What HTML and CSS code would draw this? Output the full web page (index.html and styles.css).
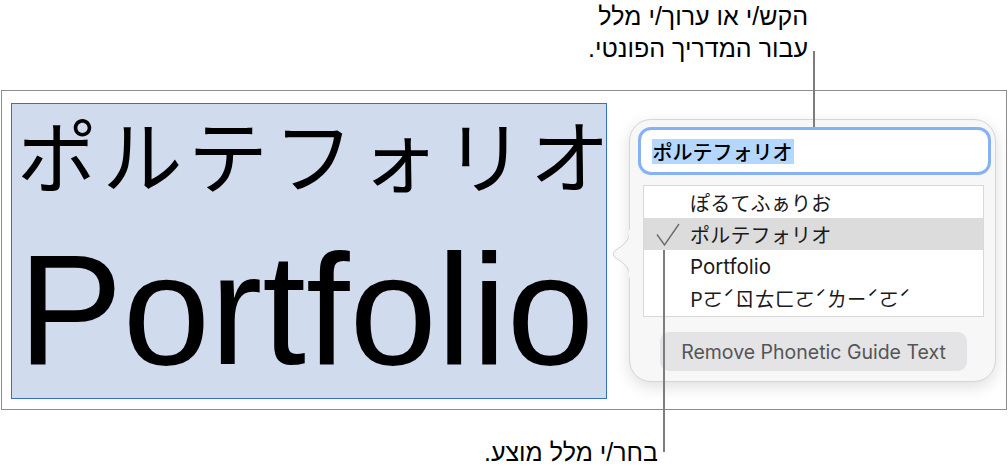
FILE: index.html
```html
<!DOCTYPE html>
<html lang="he">
<head>
<meta charset="utf-8">
<title>Phonetic Guide</title>
<link rel="stylesheet" href="styles.css">
</head>
<body>
<div class="page">
  <div class="label label-top" dir="rtl">
    <div>הקש/י או ערוך/י מלל</div>
    <div>עבור המדריך הפונטי.</div>
  </div>

  <div class="frame">
    <div class="selection">
      <div class="jp-big" lang="ja">ポルテフォリオ</div>
      <div class="en-big">Portfolio</div>
    </div>

    <div class="popover">
      <svg class="arrow" width="20" height="48" viewBox="0 0 20 48">
        <path d="M19 1 C19 11 11 16 4 20.5 Q0.5 24 4 27.5 C11 32 19 37 19 47 Z" fill="#f7f7f8" stroke="#d2d2d2" stroke-width="1"/>
        <rect x="18" y="0" width="3" height="48" fill="#f7f7f8"/>
      </svg>
      <div class="field"><span class="field-sel" lang="ja">ポルテフォリオ</span></div>
      <div class="list">
        <div class="row"><span class="check"></span><span class="jp" lang="ja">ぽるてふぁりお</span></div>
        <div class="row row-on"><span class="check"><svg width="24" height="23" viewBox="0 0 24 23"><path d="M1 11.5 L8.5 22 L23 1" fill="none" stroke="#6b6b6b" stroke-width="1.4"/></svg></span><span class="jp" lang="ja">ポルテフォリオ</span></div>
        <div class="row"><span class="check"></span><span class="en">Portfolio</span></div>
        <div class="row"><span class="check"></span><span class="bpmf" lang="zh-TW">Pㄛˊㄖㄊㄈㄛˊㄌㄧˊㄛˊ</span></div>
      </div>
      <div class="btn">Remove Phonetic Guide Text</div>
    </div>
  </div>

  <div class="label label-bottom" dir="rtl">בחר/י מלל מוצע.</div>

  <div class="callout callout-top"></div>
  <div class="callout callout-bottom"></div>
</div>
</body>
</html>
```

FILE: styles.css
```css
html, body {
  margin: 0;
  padding: 0;
  background: #ffffff;
}

.page {
  position: relative;
  width: 1008px;
  height: 471px;
  overflow: hidden;
  font-family: "Liberation Sans", "DejaVu Sans", sans-serif;
  color: #000;
}

.label {
  font-family: "Liberation Sans", "DejaVu Sans", sans-serif;
  font-size: 25px;
  line-height: 32px;
  text-align: right;
  color: #000;
}

.label-top {
  padding-right: 200px;
  height: 64px;
  margin-bottom: 26px;
}

.label-bottom {
  padding-right: 350px;
  margin-top: 26px;
}

.frame {
  box-sizing: border-box;
  margin-left: 1px;
  width: 1006px;
  height: 320px;
  border: 1px solid #8d8d8d;
  display: flex;
  align-items: flex-start;
  padding: 12px 0 0 9px;
  gap: 22px;
}

.selection {
  box-sizing: border-box;
  width: 596px;
  height: 296px;
  background: #d0dcee;
  border: 1px solid #3570c2;
  display: flex;
  flex-direction: column;
  padding: 8px 0 0 5px;
}

.jp-big {
  font-family: "Noto Sans CJK JP", sans-serif;
  font-size: 80px;
  line-height: 80px;
  height: 80px;
  letter-spacing: 5.5px;
  white-space: nowrap;
}

.en-big {
  font-family: "Liberation Sans", Arial, sans-serif;
  font-size: 157px;
  line-height: 157px;
  margin-top: 39px;
  margin-left: 1px;
  white-space: nowrap;
}

.popover {
  position: relative;
  box-sizing: border-box;
  width: 367px;
  height: 263px;
  margin-top: 16px;
  background: #f7f7f8;
  border: 1px solid #d6d6d6;
  border-radius: 22px;
  box-shadow: 0 5px 16px rgba(0, 0, 0, 0.13);
  padding: 7px 4px 0 8px;
}

.arrow {
  position: absolute;
  left: -19px;
  top: 110px;
}

.field {
  box-sizing: border-box;
  height: 48px;
  background: #fff;
  border: 3.5px solid #86b1f6;
  border-radius: 13px;
  display: flex;
  align-items: center;
  padding-left: 10.5px;
}

.field-sel {
  font-family: "Noto Sans CJK JP", sans-serif;
  font-weight: 500;
  font-size: 20px;
  line-height: 25px;
  background: #b3d7fe;
  padding: 0 1px;
}

.list {
  box-sizing: border-box;
  margin: 10px 7px 0 5px;
  height: 132px;
  background: #fff;
  border: 1px solid #d9d9d9;
  padding-bottom: 2px;
}

.row {
  height: 32px;
  display: flex;
  align-items: center;
  padding-left: 12px;
  font-size: 19px;
  color: #1a1a1a;
}

.row-on {
  background: #dcdcdc;
}

.check {
  width: 34px;
  height: 23px;
  flex: none;
  display: flex;
  align-items: center;
}

.check svg {
  display: block;
}

.jp {
  font-family: "Noto Sans CJK JP", sans-serif;
  font-size: 20px;
  letter-spacing: 0.2px;
}

.en {
  font-family: "Inter", "Liberation Sans", sans-serif;
  font-size: 20.5px;
}

.bpmf {
  font-family: "Noto Sans CJK TC", sans-serif;
  font-size: 20px;
}

.btn {
  box-sizing: border-box;
  margin: 15px 0 0 22px;
  width: 307px;
  height: 39px;
  border-radius: 9px;
  background: #e4e4e6;
  color: #555555;
  font-family: "Inter", "Liberation Sans", sans-serif;
  font-size: 19.5px;
  display: flex;
  align-items: center;
  justify-content: center;
}

.callout {
  position: absolute;
  width: 1.5px;
  background: #7d7d7d;
}

.callout-top {
  left: 813px;
  top: 51px;
  height: 76px;
}

.callout-bottom {
  left: 663px;
  top: 250px;
  height: 202px;
}
```
